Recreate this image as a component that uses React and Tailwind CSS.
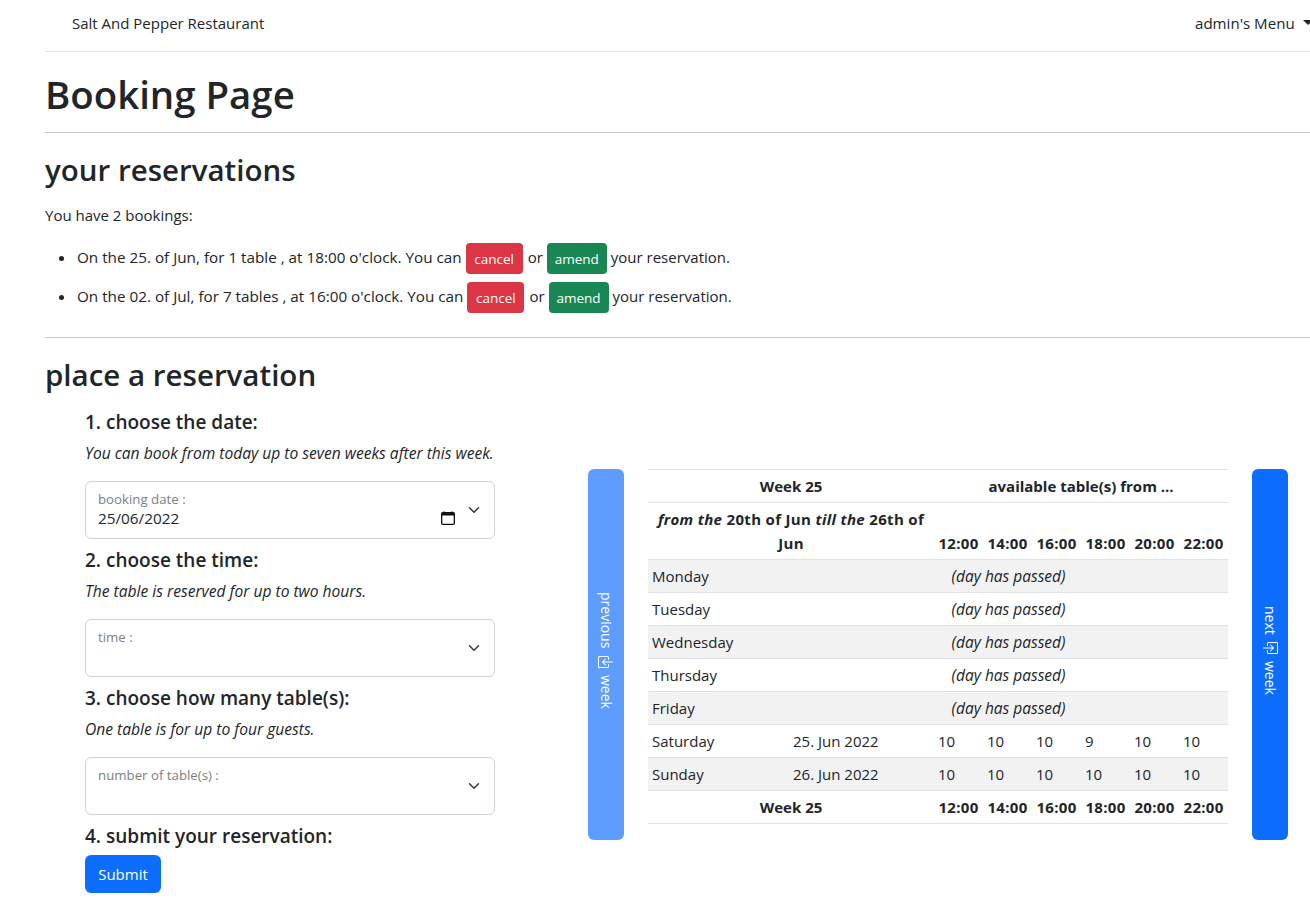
import React from 'react';

const weekTimes = ['12:00', '14:00', '16:00', '18:00', '20:00', '22:00'];
const passedDays = ['Monday', 'Tuesday', 'Wednesday', 'Thursday', 'Friday'];
const openDays = [
  { day: 'Saturday', date: '25. Jun 2022', tables: [10, 10, 10, 9, 10, 10] },
  { day: 'Sunday', date: '26. Jun 2022', tables: [10, 10, 10, 10, 10, 10] },
];

function Chevron() {
  return (
    <svg viewBox="0 0 16 16" className="w-4 h-3" fill="none" stroke="#343a40" strokeWidth="2" strokeLinecap="round" strokeLinejoin="round">
      <path d="M2 5l6 6 6-6" />
    </svg>
  );
}

function ArrowIn({ direction }) {
  return (
    <svg viewBox="0 0 16 16" className="w-4 h-4 my-[5px]" fill="currentColor">
      {direction === 'left' ? (
        <>
          <path d="M10 3.5a.5.5 0 0 0-.5-.5h-8a.5.5 0 0 0-.5.5v9a.5.5 0 0 0 .5.5h8a.5.5 0 0 0 .5-.5v-2a.5.5 0 0 1 1 0v2A1.5 1.5 0 0 1 9.5 14h-8A1.5 1.5 0 0 1 0 12.5v-9A1.5 1.5 0 0 1 1.5 2h8A1.5 1.5 0 0 1 11 3.5v2a.5.5 0 0 1-1 0v-2z" />
          <path d="M4.146 8.354a.5.5 0 0 1 0-.708l3-3a.5.5 0 1 1 .708.708L5.707 7.5H14.5a.5.5 0 0 1 0 1H5.707l2.147 2.146a.5.5 0 0 1-.708.708l-3-3z" />
        </>
      ) : (
        <>
          <path d="M6 3.5a.5.5 0 0 1 .5-.5h8a.5.5 0 0 1 .5.5v9a.5.5 0 0 1-.5.5h-8a.5.5 0 0 1-.5-.5v-2a.5.5 0 0 0-1 0v2A1.5 1.5 0 0 0 6.5 14h8a1.5 1.5 0 0 0 1.5-1.5v-9A1.5 1.5 0 0 0 14.5 2h-8A1.5 1.5 0 0 0 5 3.5v2a.5.5 0 0 0 1 0v-2z" />
          <path d="M11.854 8.354a.5.5 0 0 0 0-.708l-3-3a.5.5 0 1 0-.708.708L10.293 7.5H1.5a.5.5 0 0 0 0 1h8.793l-2.147 2.146a.5.5 0 0 0 .708.708l3-3z" />
        </>
      )}
    </svg>
  );
}

function FloatingField({ label, value }) {
  return (
    <div className="relative h-[58px] w-[410px] rounded-md border border-[#ced4da] bg-white">
      <span className="absolute left-3 top-[7px] text-[13.25px] leading-[20px] text-[#7b8085]">{label}</span>
      {value && <span className="absolute left-3 top-6 text-[15.3px] leading-6">{value}</span>}
      {value && (
        <svg viewBox="0 0 16 16" className="absolute right-[39px] top-[29px] w-[14px] h-[14px]" fill="#111">
          <path d="M3.5 0a.5.5 0 0 1 .5.5V1h8V.5a.5.5 0 0 1 1 0V1h1a2 2 0 0 1 2 2v11a2 2 0 0 1-2 2H2a2 2 0 0 1-2-2V3a2 2 0 0 1 2-2h1V.5a.5.5 0 0 1 .5-.5zM1.5 5v9a.5.5 0 0 0 .5.5h12a.5.5 0 0 0 .5-.5V5h-13z" />
        </svg>
      )}
      <span className="absolute right-3 top-[22px]">
        <Chevron />
      </span>
    </div>
  );
}

function Step({ title, hint, children }) {
  return (
    <div>
      <h5 className="text-[19px] leading-6 font-semibold mb-[7px]">{title}</h5>
      {hint && <p className="italic text-[15.6px] leading-6 mb-4">{hint}</p>}
      {children}
    </div>
  );
}

function Booking({ date, tables, time }) {
  return (
    <li className="h-[39px] flex items-center">
      <span className="w-[5px] h-[5px] rounded-full bg-[#212529] mr-[14px] ml-[-18px]" />
      <span className="mb-1 -ml-px text-[15.25px]">
        On the {date}, for {tables} , at {time} o'clock. You can
      </span>
      <button className="ml-1 h-[31px] w-[57px] rounded bg-[#dc3545] text-white text-[13.5px]">cancel</button>
      <span className="ml-[5px] mr-1 mb-1">or</span>
      <button className="h-[31px] w-[60px] rounded bg-[#198754] text-white text-[13.5px]">amend</button>
      <span className="ml-1 mb-1">your reservation.</span>
    </li>
  );
}

function WeekButton({ label, direction, disabled }) {
  return (
    <button
      className={`w-9 self-stretch rounded-md text-white flex items-center justify-center ${disabled ? 'bg-[#5e9dfd]' : 'bg-[#0d6efd]'}`}
    >
      <span className="flex flex-col items-center pb-[7px] text-[14px]">
        <span className="[writing-mode:vertical-rl]">{label}</span>
        <ArrowIn direction={direction} />
        <span className="[writing-mode:vertical-rl]">week</span>
      </span>
    </button>
  );
}

export default function App() {
  return (
    <div className="w-[1310px] h-[908px] overflow-hidden bg-white text-[#212529] text-[15px] leading-6 font-['Open_Sans',sans-serif]">
      <nav className="ml-[45px] h-[52px] border-b border-[#dee2e6] flex items-center justify-between pl-[27px] pb-[6px] mb-px">
        <span>Salt And Pepper Restaurant</span>
        <span className="flex items-center w-[115px] shrink-0 whitespace-nowrap text-[15.1px]">
          admin's Menu
          <span className="ml-2 w-0 h-0 border-x-[5px] border-x-transparent border-t-[5px] border-t-[#212529]" />
        </span>
      </nav>

      <main className="ml-[45px]">
        <h1 className="text-[38.4px] leading-[48px] font-semibold pt-[17px] pb-[14px] border-b border-[#c4c6c8]">Booking Page</h1>
        <h2 className="text-[29.5px] leading-[38px] font-semibold mt-[18px] mb-[14px]">your reservations</h2>
        <p className="mb-3">You have 2 bookings:</p>
        <ul className="pl-8 pb-5 border-b border-[#c4c6c8]">
          <Booking date="25. of Jun" tables="1 table" time="18:00" />
          <Booking date="02. of Jul" tables="7 tables" time="16:00" />
        </ul>
        <h2 className="text-[29.5px] leading-[38px] font-semibold mt-[18px] mb-4">place a reservation</h2>

        <div className="flex items-center pl-10">
          <div className="w-[410px] shrink-0 flex flex-col gap-[9px]">
            <Step title="1. choose the date:" hint="You can book from today up to seven weeks after this week.">
              <FloatingField label="booking date :" value="25/06/2022" />
            </Step>
            <Step title="2. choose the time:" hint="The table is reserved for up to two hours.">
              <FloatingField label="time :" />
            </Step>
            <Step title="3. choose how many table(s):" hint="One table is for up to four guests.">
              <FloatingField label="number of table(s) :" />
            </Step>
            <div>
              <h5 className="text-[19px] leading-6 font-semibold mb-[7px]">4. submit your reservation:</h5>
              <button className="h-[38px] w-[76px] rounded-md bg-[#0d6efd] text-white">Submit</button>
            </div>
          </div>

          <div className="flex items-stretch ml-[93px] mt-[5px] shrink-0">
            <WeekButton label="previous" direction="left" disabled />
            <div className="mx-6 w-[580px] pb-4">
              <table className="w-[580px] table-fixed border-collapse [&_td]:p-1 [&_th]:p-1 [&_tr]:border-y [&_tr]:border-[#dee2e6] [&_td]:text-[15px] [&_th]:text-[15px]">
                <colgroup>
                  <col className="w-[141px]" />
                  <col className="w-[145px]" />
                  <col span="6" className="w-[49px]" />
                </colgroup>
                <tbody>
                  <tr>
                    <th colSpan={2}>Week 25</th>
                    <th colSpan={6}>available table(s) from ...</th>
                  </tr>
                  <tr className="align-bottom">
                    <th colSpan={2} className="tracking-[0.33px]">
                      <i>from the</i> 20th of Jun <i>till the</i> 26th of Jun
                    </th>
                    {weekTimes.map((t) => (
                      <th key={t} className="tracking-[0.3px]">{t}</th>
                    ))}
                  </tr>
                  {passedDays.map((d, i) => (
                    <tr key={d} className={i % 2 === 0 ? 'bg-[#f2f2f2]' : ''}>
                      <td>{d}</td>
                      <td colSpan={7} className="text-center italic !text-[15.5px]">(day has passed)</td>
                    </tr>
                  ))}
                  {openDays.map((row, i) => (
                    <tr key={row.day} className={i % 2 === 1 ? 'bg-[#f2f2f2]' : ''}>
                      <td>{row.day}</td>
                      <td>{row.date}</td>
                      {row.tables.map((n, j) => (
                        <td key={j}>{n}</td>
                      ))}
                    </tr>
                  ))}
                  <tr>
                    <th colSpan={2}>Week 25</th>
                    {weekTimes.map((t) => (
                      <th key={t} className="tracking-[0.3px]">{t}</th>
                    ))}
                  </tr>
                </tbody>
              </table>
            </div>
            <WeekButton label="next" direction="right" />
          </div>
        </div>
      </main>
    </div>
  );
}
